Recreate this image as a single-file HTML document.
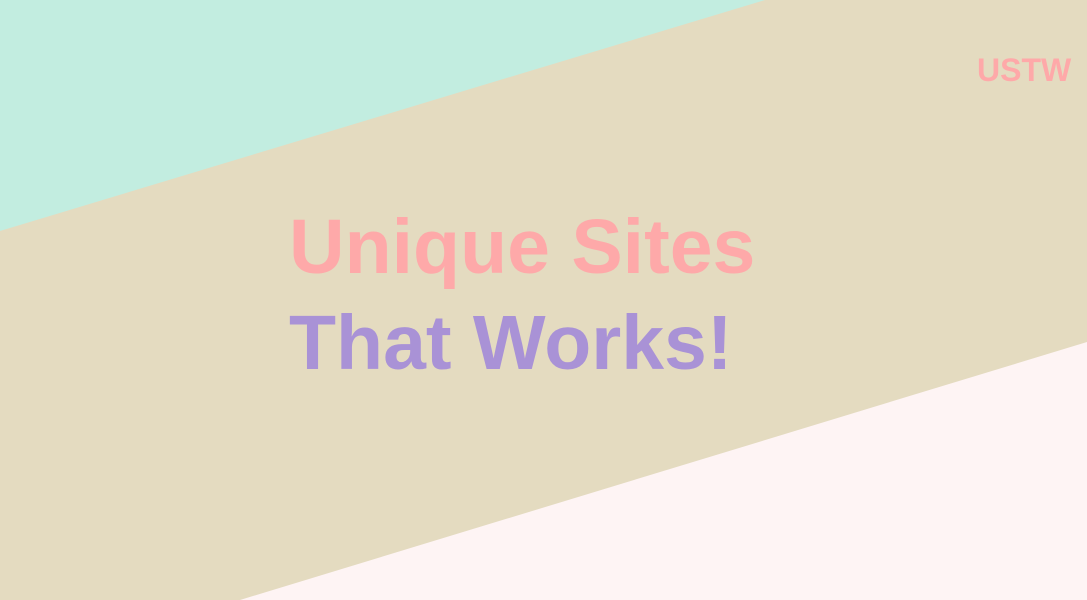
<!DOCTYPE html>
<html><head><style>
html,body{margin:0;padding:0;width:1087px;height:600px;overflow:hidden;background:#e4dbc0;font-family:"Liberation Sans",sans-serif}
svg{position:absolute;left:0;top:0}
.t{position:absolute;font-weight:700;white-space:nowrap;line-height:1}
</style></head><body>
<svg width="1087" height="600">
<polygon points="0,0 765,0 0,231" fill="#c2ede0"/>
<polygon points="1087,342 1087,600 240,600" fill="#fef4f4"/>
</svg>
<div class="t" style="left:977px;top:54px;font-size:32px;color:#fea9a9">USTW</div>
<div class="t" style="left:289px;top:209px;font-size:77px;color:#fea9a9">Unique Sites</div>
<div class="t" style="left:289px;top:305px;font-size:77px;color:#a992d6">That Works!</div>
</body></html>
